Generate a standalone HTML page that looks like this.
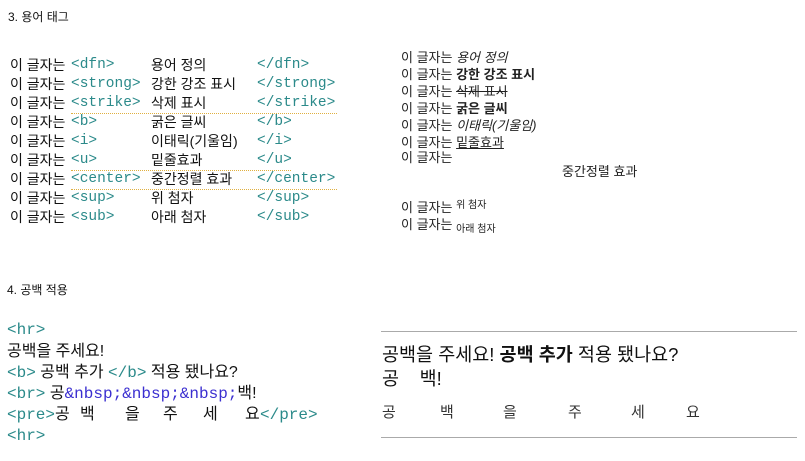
<!DOCTYPE html>
<html><head><meta charset="utf-8"><style>
body{margin:0;width:805px;height:461px;background:#fff;position:relative;overflow:hidden;font-family:"Liberation Sans","Noto Sans CJK KR",sans-serif;color:#111}
.a{position:absolute;white-space:pre;line-height:1}
.m{font-family:"Liberation Mono","Noto Sans CJK KR",monospace}
.t{color:#2b8a8a;font-family:"Liberation Mono",monospace}
.e{color:#3b2fd0;font-family:"Liberation Mono",monospace}
.c{font-size:14px}
.ct{font-size:14.5px}
.r{font-size:13px;color:#222}
.b{font-size:16px}
.g{font-size:18.5px}
.hr{position:absolute;left:381px;width:416px;height:1px;background:#aaa}
</style></head><body>
<div class="a" style="left:8px;top:11px;font-size:12px">3. 용어 태그</div>

<div class="a c" style="left:10px;top:58px">이 글자는</div><div class="a ct t" style="left:71px;top:58px">&lt;dfn&gt;</div><div class="a c" style="left:151px;top:58px">용어 정의</div><div class="a ct t" style="left:257px;top:58px">&lt;/dfn&gt;</div>
<div class="a c" style="left:10px;top:77px">이 글자는</div><div class="a ct t" style="left:71px;top:77px">&lt;strong&gt;</div><div class="a c" style="left:151px;top:77px">강한 강조 표시</div><div class="a ct t" style="left:257px;top:77px">&lt;/strong&gt;</div>
<div class="a c" style="left:10px;top:96px">이 글자는</div><div class="a ct t" style="left:71px;top:96px">&lt;strike&gt;</div><div class="a c" style="left:151px;top:96px">삭제 표시</div><div class="a ct t" style="left:257px;top:96px">&lt;/strike&gt;</div>
<div class="a c" style="left:10px;top:115px">이 글자는</div><div class="a ct t" style="left:71px;top:115px">&lt;b&gt;</div><div class="a c" style="left:151px;top:115px">굵은 글씨</div><div class="a ct t" style="left:257px;top:115px">&lt;/b&gt;</div>
<div class="a c" style="left:10px;top:134px">이 글자는</div><div class="a ct t" style="left:71px;top:134px">&lt;i&gt;</div><div class="a c" style="left:151px;top:134px">이태릭(기울임)</div><div class="a ct t" style="left:257px;top:134px">&lt;/i&gt;</div>
<div class="a c" style="left:10px;top:153px">이 글자는</div><div class="a ct t" style="left:71px;top:153px">&lt;u&gt;</div><div class="a c" style="left:151px;top:153px">밑줄효과</div><div class="a ct t" style="left:257px;top:153px">&lt;/u&gt;</div>
<div class="a c" style="left:10px;top:172px">이 글자는</div><div class="a ct t" style="left:71px;top:172px">&lt;center&gt;</div><div class="a c" style="left:151px;top:172px">중간정렬 효과</div><div class="a ct t" style="left:257px;top:172px">&lt;/center&gt;</div>
<div class="a c" style="left:10px;top:191px">이 글자는</div><div class="a ct t" style="left:71px;top:191px">&lt;sup&gt;</div><div class="a c" style="left:151px;top:191px">위 첨자</div><div class="a ct t" style="left:257px;top:191px">&lt;/sup&gt;</div>
<div class="a c" style="left:10px;top:210px">이 글자는</div><div class="a ct t" style="left:71px;top:210px">&lt;sub&gt;</div><div class="a c" style="left:151px;top:210px">아래 첨자</div><div class="a ct t" style="left:257px;top:210px">&lt;/sub&gt;</div>
<div style="position:absolute;left:71px;top:113px;width:266px;border-top:1px dotted #e0b040"></div>
<div style="position:absolute;left:71px;top:170px;width:220px;border-top:1px dotted #e0b040"></div>
<div style="position:absolute;left:71px;top:189px;width:266px;border-top:1px dotted #e0b040"></div>

<div class="a r" style="left:401px;top:51px">이 글자는 <i>용어 정의</i></div>
<div class="a r" style="left:401px;top:68px">이 글자는 <b>강한 강조 표시</b></div>
<div class="a r" style="left:401px;top:85px">이 글자는 <s>삭제 표시</s></div>
<div class="a r" style="left:401px;top:102px">이 글자는 <b>굵은 글씨</b></div>
<div class="a r" style="left:401px;top:119px">이 글자는 <i>이태릭(기울임)</i></div>
<div class="a r" style="left:401px;top:136px">이 글자는 <u>밑줄효과</u></div>
<div class="a r" style="left:401px;top:151px">이 글자는</div>
<div class="a r" style="left:562px;top:165px">중간정렬 효과</div>
<div class="a r" style="left:401px;top:201px">이 글자는 <span style="font-size:10px;position:relative;top:-4px">위 첨자</span></div>
<div class="a r" style="left:401px;top:218px">이 글자는 <span style="font-size:10px;position:relative;top:3px">아래 첨자</span></div>

<div class="a" style="left:7px;top:284px;font-size:12px">4. 공백 적용</div>

<div class="a b t" style="left:7px;top:322px">&lt;hr&gt;</div>
<div class="a b" style="left:7px;top:344px">공백을 주세요!</div>
<div class="a b" style="left:7px;top:365px"><span class="t">&lt;b&gt;</span> 공백 추가 <span class="t">&lt;/b&gt;</span> 적용 됐나요?</div>
<div class="a b" style="left:7px;top:386px"><span class="t">&lt;br&gt;</span> 공<span class="e">&amp;nbsp;&amp;nbsp;&amp;nbsp;</span>백!</div>
<div class="a b t" style="left:7px;top:407px">&lt;pre&gt;</div>
<div class="a b" style="left:55px;top:407px">공</div>
<div class="a b" style="left:80px;top:407px">백</div>
<div class="a b" style="left:125px;top:407px">을</div>
<div class="a b" style="left:163px;top:407px">주</div>
<div class="a b" style="left:203px;top:407px">세</div>
<div class="a b" style="left:245px;top:407px">요</div>
<div class="a b t" style="left:260px;top:407px">&lt;/pre&gt;</div>
<div class="a b t" style="left:7px;top:428px">&lt;hr&gt;</div>

<div class="hr" style="top:331px"></div>
<div class="a g" style="left:382px;top:346px">공백을 주세요! <b>공백 추가</b> 적용 됐나요?</div>
<div class="a g" style="left:382px;top:370px">공&nbsp;&nbsp;&nbsp;&nbsp;백!</div>
<div class="a" style="left:382px;top:405px;font-size:15px;color:#333">공</div>
<div class="a" style="left:440px;top:405px;font-size:15px;color:#333">백</div>
<div class="a" style="left:503px;top:405px;font-size:15px;color:#333">을</div>
<div class="a" style="left:568px;top:405px;font-size:15px;color:#333">주</div>
<div class="a" style="left:631px;top:405px;font-size:15px;color:#333">세</div>
<div class="a" style="left:686px;top:405px;font-size:15px;color:#333">요</div>
<div class="hr" style="top:437px"></div>
</body></html>
